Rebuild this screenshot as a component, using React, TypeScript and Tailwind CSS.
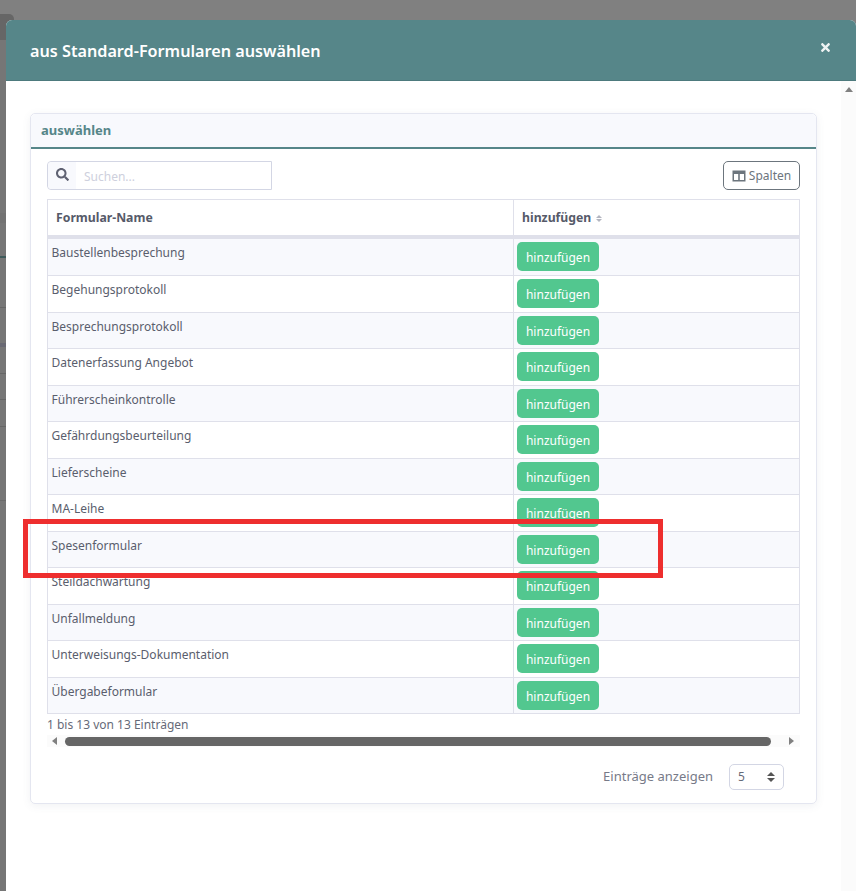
import { FaSearch, FaTimes } from 'react-icons/fa';

const FORMS = [
  'Baustellenbesprechung',
  'Begehungsprotokoll',
  'Besprechungsprotokoll',
  'Datenerfassung Angebot',
  'Führerscheinkontrolle',
  'Gefährdungsbeurteilung',
  'Lieferscheine',
  'MA-Leihe',
  'Spesenformular',
  'Steildachwartung',
  'Unfallmeldung',
  'Unterweisungs-Dokumentation',
  'Übergabeformular',
];

export default function App() {
  return (
    <div className="relative h-[891px] w-[856px] overflow-hidden bg-[#808080] pl-[6px] pt-[20px] font-['Noto_Sans',sans-serif] text-[13px] text-[#495057]">
      {/* Page behind the backdrop */}
      <div className="absolute left-0 top-[40px] h-[851px] w-[6px] bg-[#767676]" />
      <div className="absolute left-0 top-[14px] h-[26px] w-[14px] rounded-tr-[5px] bg-[#666666]" />
      <div className="absolute left-0 top-[213px] h-[10px] w-[6px] bg-[#727272]" />
      <div className="absolute left-0 top-[256px] h-[2px] w-[6px] bg-[#3e5a5a]" />
      <div className="absolute left-0 top-[307px] h-px w-[6px] bg-[#666666]" />
      <div className="absolute left-0 top-[343px] h-[4px] w-[6px] bg-[#696973]" />
      <div className="absolute left-0 top-[373px] h-px w-[6px] bg-[#666666]" />
      <div className="absolute left-0 top-[399px] h-px w-[6px] bg-[#666666]" />
      <div className="absolute left-0 top-[426px] h-px w-[6px] bg-[#666666]" />
      <div className="absolute left-0 top-[500px] h-px w-[6px] bg-[#6a6a6a]" />

      {/* Modal */}
      <div className="relative flex h-[871px] flex-col overflow-hidden rounded-t-[6px] bg-white">
        {/* Header */}
        <div className="flex h-[61px] shrink-0 items-start justify-between border-b border-[#4d7a7d] bg-[#568689] pl-[24px] pr-[25px] text-white">
          <h2 className="mt-[19px] text-[16.2px] font-semibold leading-[24px]">aus Standard-Formularen auswählen</h2>
          <FaTimes className="mt-[21px] h-[13px] w-[11px] text-[#eef3f3]" />
        </div>

        <div className="relative flex-1 pl-[24px] pt-[32px]">
          {/* Scroll track */}
          <div className="absolute bottom-0 right-0 top-0 w-[15px] bg-[#fbfbfb]">
            <div className="mx-auto mt-[6px] h-0 w-0 border-x-[4px] border-b-[5px] border-x-transparent border-b-[#808080]" />
          </div>

          {/* Card */}
          <div className="h-[691px] w-[787px] rounded-[5px] border border-[#e4e6f0] shadow-[0_2px_8px_rgba(80,85,120,0.08)]">
            <div className="h-[35px] rounded-t-[5px] border-b-2 border-[#568689] bg-[#f8f9fd] pl-[10px] pt-[6px] text-[13px] font-bold leading-[20px] text-[#568689]">
              auswählen
            </div>

            <div className="px-[16px] pt-[12px]">
              {/* Toolbar */}
              <div className="flex h-[29px] items-start justify-between">
                <div className="flex h-[29px] w-[225px] rounded-l-[4px] border border-[#d3d6e4]">
                  <div className="flex w-[28px] items-center justify-center rounded-l-[4px] bg-[#f8f9fd]">
                    <FaSearch className="mb-[3px] h-[13px] w-[13px] text-[#5f6272]" />
                  </div>
                  <span className="ml-[8px] text-[12px] leading-[29px] text-[#ced0dd]">Suchen...</span>
                </div>
                <button className="flex h-[29px] w-[77px] items-center justify-center gap-[3px] rounded-[5px] border border-[#6c757d] text-[12px] text-[#6c757d]">
                  <svg width="14" height="12" viewBox="0 0 14 12">
                    <path fillRule="evenodd" fill="#6c757d" d="M0.5 0.5h13v11h-13zM2 4v6h4.2V4zM7.8 4v6H12V4z" />
                  </svg>
                  Spalten
                </button>
              </div>

              {/* Table */}
              <table className="mt-[9px] w-[753px] table-fixed border-collapse">
                <thead>
                  <tr className="h-[37px] border-b-[4px] border-[#dfe0ea]">
                    <th className="w-[466px] border border-b-[4px] border-[#dfe0ea] pl-[8px] pt-[2px] text-left text-[12.25px] font-bold text-[#565a69]">
                      Formular-Name
                    </th>
                    <th className="border border-b-[4px] border-[#dfe0ea] pl-[8px] pt-[2px] text-left text-[12.25px] font-bold text-[#565a69]">
                      <span className="inline-flex items-center gap-[5px]">
                        hinzufügen
                        <span className="flex flex-col gap-[1px]">
                          <span className="h-0 w-0 border-x-[3px] border-b-[3px] border-x-transparent border-b-[#b3b5c0]" />
                          <span className="h-0 w-0 border-x-[3px] border-t-[3px] border-x-transparent border-t-[#b3b5c0]" />
                        </span>
                      </span>
                    </th>
                  </tr>
                </thead>
                <tbody>
                  {FORMS.map((name, i) => (
                    <tr key={name} className={i === 0 ? 'h-[39px] bg-[#f8f9fd]' : i % 2 === 0 ? 'h-[36px] bg-[#f8f9fd]' : 'h-[37px] bg-white'}>
                      <td className="border border-[#dfe0ea] pl-[3.5px] pt-[5px] align-top text-[12px] leading-[18px] text-[#5a5e6d]">{name}</td>
                      <td className="border border-[#dfe0ea] pl-[3px] pt-[3px] align-top leading-none">
                        <button className="h-[29px] w-[82px] rounded-[5px] bg-[#52c78f] pt-[2px] text-[12px] leading-[27px] text-white">hinzufügen</button>
                      </td>
                    </tr>
                  ))}
                </tbody>
              </table>

              <div className="mt-[2px] text-[12px] leading-[18px] text-[#666a78]">1 bis 13 von 13 Einträgen</div>

              {/* Horizontal scrollbar */}
              <div className="mt-[1px] flex h-[12px] w-[753px] items-center bg-[#fbfbfb] pl-[5px] pr-[6px]">
                <span className="h-0 w-0 border-y-[4px] border-r-[5px] border-y-transparent border-r-[#808080]" />
                <span className="ml-[8px] mr-[18px] h-[9px] flex-1 rounded-full bg-[#666666]" />
                <span className="h-0 w-0 border-y-[4px] border-l-[5px] border-y-transparent border-l-[#808080]" />
              </div>

              {/* Page size */}
              <div className="mt-[17px] flex items-center justify-end pr-[16px]">
                <span className="mr-[16px] text-[13px] text-[#777a88]">Einträge anzeigen</span>
                <div className="flex h-[26px] w-[55px] items-center justify-between rounded-[5px] border border-[#d3d6e4] pl-[8px] pr-[8px] text-[12px] text-[#666a78]">
                  5
                  <span className="flex flex-col gap-[2px]">
                    <span className="h-0 w-0 border-x-[4px] border-b-[4px] border-x-transparent border-b-[#555]" />
                    <span className="h-0 w-0 border-x-[4px] border-t-[4px] border-x-transparent border-t-[#555]" />
                  </span>
                </div>
              </div>
            </div>
          </div>
        </div>
      </div>

      {/* Red annotation */}
      <div className="absolute left-[23px] top-[519px] h-[59px] w-[640px] border-[5px] border-[#ee2e2e]" />
    </div>
  );
}
